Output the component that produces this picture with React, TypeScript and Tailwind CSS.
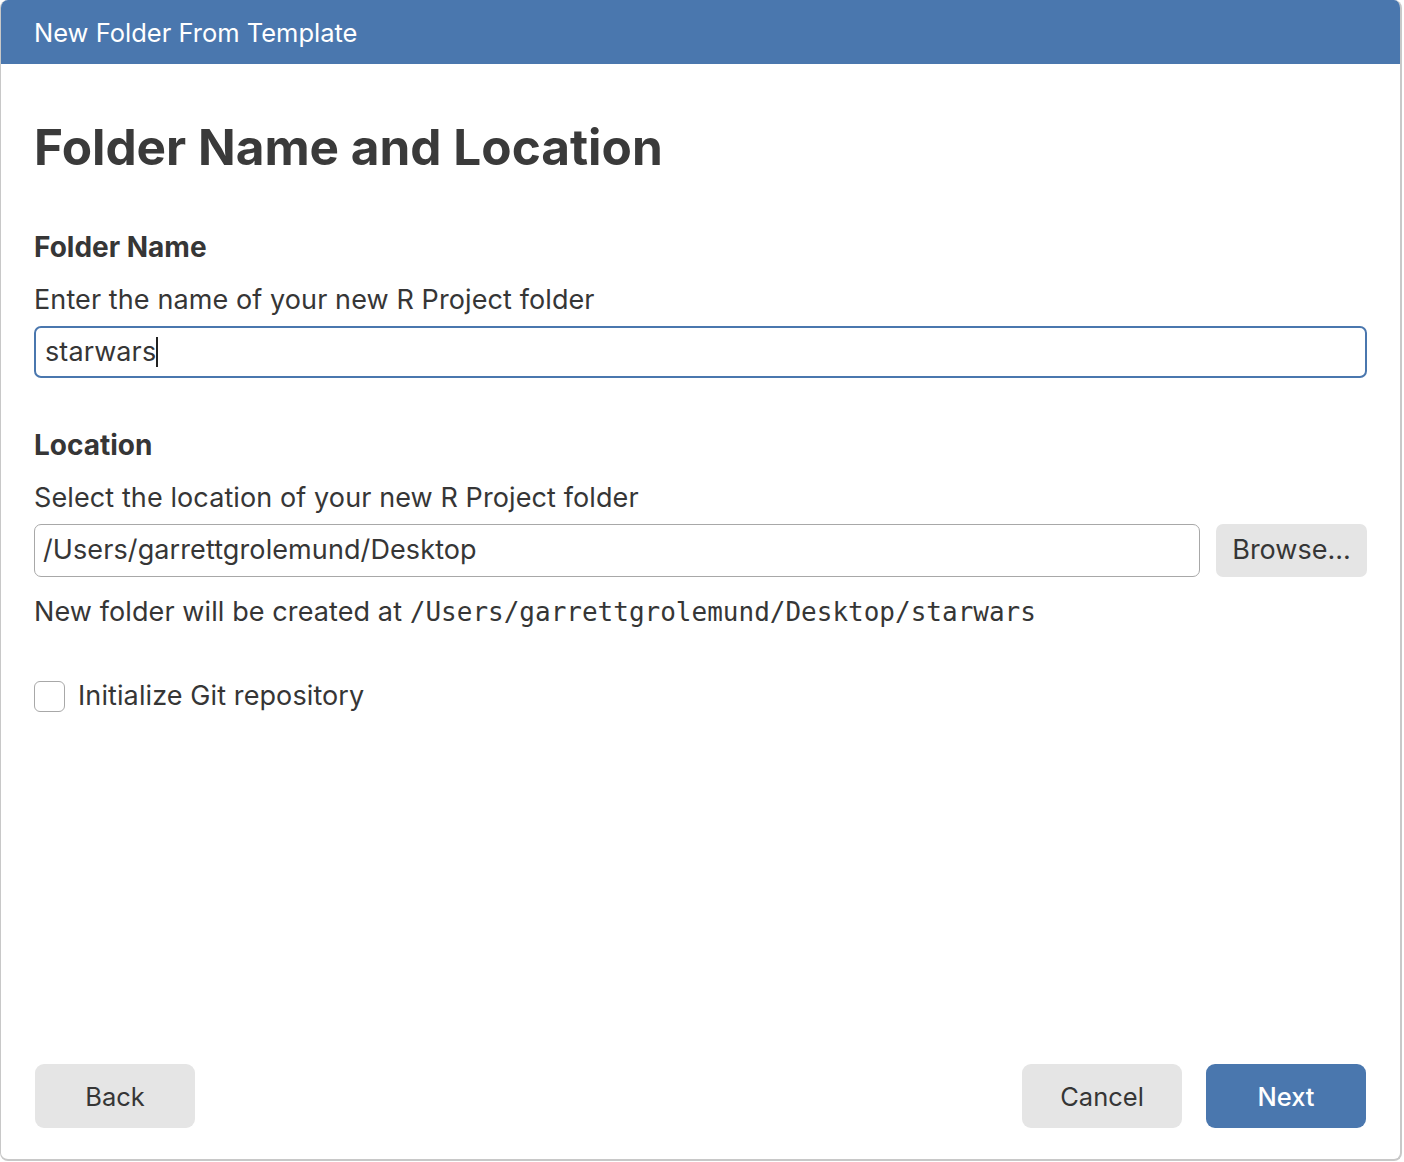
import React from "react";

export default function App() {
  return (
    <div className="w-[1404px] h-[1162px] bg-white" style={{ fontFamily: "Inter, 'Noto Sans', sans-serif" }}>
      <div className="w-[1402px] h-[1161px] flex flex-col rounded-[8px] border-l border-r-2 border-b-2 border-[#c8c8c8] overflow-hidden text-[#363636]">
        <div className="h-[64px] bg-[#4a77ae] flex items-center pl-[33px] pt-[3px] text-white text-[25.5px]">
          New Folder From Template
        </div>
        <div className="flex-1 flex flex-col px-[33px]">
          <h1 className="mt-[51px] text-[49.5px] font-bold leading-[64px] text-[#3a3a3a]">Folder Name and Location</h1>
          <div className="mt-[50px] text-[28px] font-bold leading-[36px]">Folder Name</div>
          <div className="mt-[17px] text-[27px] tracking-[0.1px] leading-[36px]">Enter the name of your new R Project folder</div>
          <div className="mt-[8px] h-[52px] w-full rounded-[7px] border-2 border-[#4a77ae] flex items-center pl-[9px] text-[27px] tracking-[0.1px]">
            <span>starwars</span>
            <span className="w-[2px] h-[30px] bg-[#222]" />
          </div>
          <div className="mt-[49px] text-[28px] font-bold leading-[36px]">Location</div>
          <div className="mt-[17px] text-[27px] tracking-[0.1px] leading-[36px]">Select the location of your new R Project folder</div>
          <div className="mt-[8px] flex gap-[16px]">
            <div className="flex-1 h-[53px] rounded-[7px] border-[1.5px] border-[#a8a8a8] flex items-center pl-[8px] text-[27px] tracking-[0.1px]">/Users/garrettgrolemund/Desktop</div>
            <div className="w-[151px] h-[53px] rounded-[7px] bg-[#e5e5e5] flex items-center justify-center text-[27px]">Browse...</div>
          </div>
          <div className="mt-[17px] text-[27px] tracking-[0.1px] leading-[36px]">
            New folder will be created at{" "}
            <span style={{ fontFamily: "'DejaVu Sans Mono', monospace" }} className="text-[26px] tracking-normal">/Users/garrettgrolemund/Desktop/starwars</span>
          </div>
          <div className="mt-[48px] flex items-center gap-[13px]">
            <div className="w-[31px] h-[31px] rounded-[6px] border-[1.5px] border-[#a8a8a8] bg-white" />
            <span className="text-[27px] tracking-[0.1px] leading-[36px]">Initialize Git repository</span>
          </div>
          <div className="flex-1" />
          <div className="flex items-center mb-[31px] pl-[1px]">
            <button className="w-[160px] h-[64px] rounded-[9px] bg-[#e5e5e5] text-[25.5px] text-[#363636] pt-[2px]">Back</button>
            <div className="flex-1" />
            <button className="w-[160px] h-[64px] rounded-[9px] bg-[#e5e5e5] text-[25.5px] text-[#363636] pt-[2px]">Cancel</button>
            <button className="ml-[24px] mr-[1px] w-[160px] h-[64px] rounded-[9px] bg-[#4a77ae] text-[25.5px] text-white font-medium pt-[2px]">Next</button>
          </div>
        </div>
      </div>
    </div>
  );
}
